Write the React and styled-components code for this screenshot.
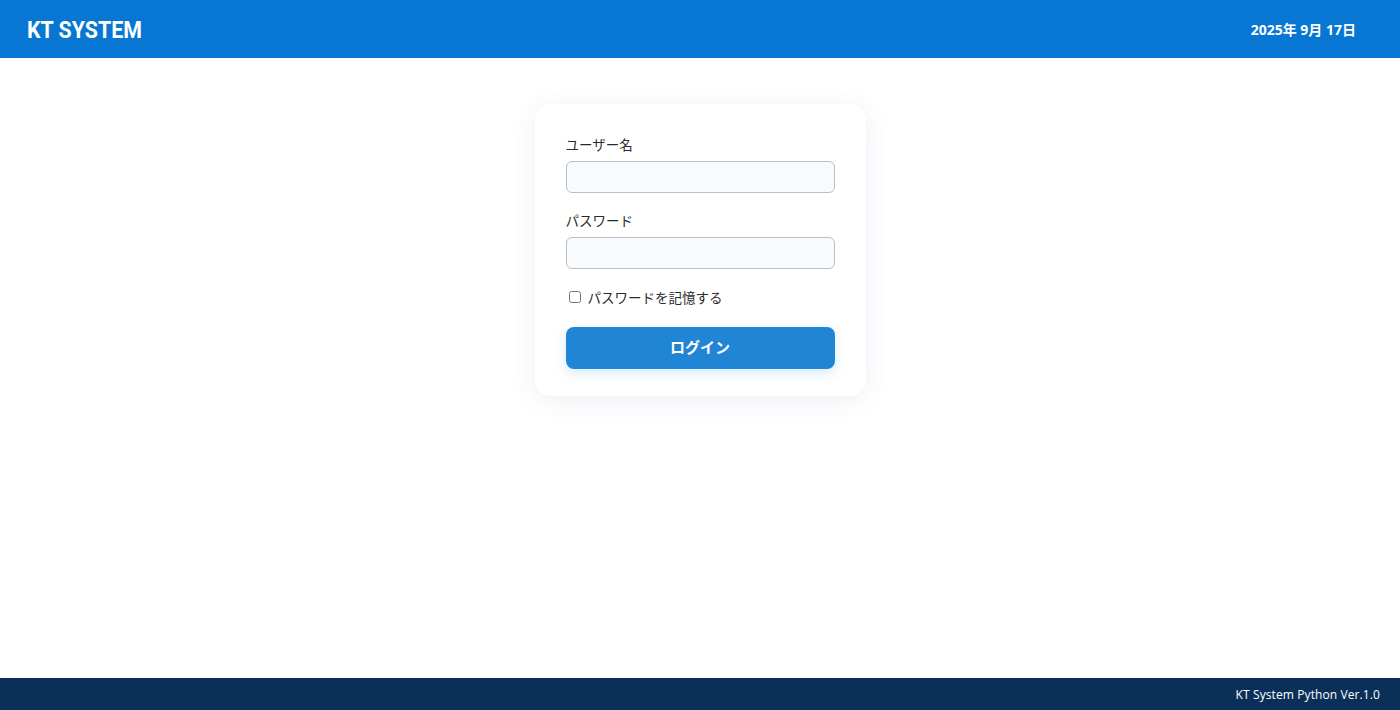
import styled, { createGlobalStyle } from 'styled-components';

const GlobalStyle = createGlobalStyle`
  * { box-sizing: border-box; }
  body {
    margin: 0;
    background: #ffffff;
    font-family: "Noto Sans", "Noto Sans CJK JP", sans-serif;
  }
`;

const Page = styled.div`
  min-height: 100vh;
  display: flex;
  flex-direction: column;
`;

const Header = styled.header`
  height: 58px;
  background: #0877d3;
  color: #fff;
  display: flex;
  align-items: center;
  justify-content: space-between;
  padding: 0 44px 0 27px;
`;

const Brand = styled.div`
  font-family: Roboto, "Liberation Sans", sans-serif;
  font-weight: 700;
  font-size: 24px;
  margin-top: 1px;
  transform: scaleX(0.89);
  transform-origin: left center;
`;

const DateText = styled.div`
  font-family: "Open Sans", "Noto Sans CJK JP", sans-serif;
  font-weight: 700;
  font-size: 14px;
`;

const Main = styled.main`
  flex: 1;
  display: flex;
  justify-content: center;
  align-items: flex-start;
  padding-top: 46px;
`;

const Card = styled.form`
  width: 331px;
  background: #fff;
  border-radius: 16px;
  padding: 31px 31px 27px;
  box-shadow: 0 4px 24px rgba(40, 80, 140, 0.09);
  display: flex;
  flex-direction: column;
`;

const Label = styled.label`
  font-family: "Noto Sans CJK JP", sans-serif;
  font-size: 13.5px;
  line-height: 18px;
  color: #2a2a2a;
  margin-top: ${p => (p.$first ? '0' : '18px')};
  margin-bottom: 8px;
`;

const Input = styled.input`
  height: 32px;
  width: 100%;
  border: 1px solid #bdbdbd;
  border-radius: 6px;
  background: #f8fbfe;
  padding: 0 10px;
  font-size: 14px;
  outline: none;
`;

const CheckRow = styled.label`
  display: flex;
  align-items: center;
  gap: 7px;
  margin-top: 18px;
  height: 20px;
  padding-left: 3px;
  font-family: "Noto Sans CJK JP", sans-serif;
  font-size: 13.5px;
  color: #2a2a2a;
`;

const Check = styled.input`
  width: 12px;
  height: 12px;
  margin: 0;
`;

const Button = styled.button`
  margin-top: 20px;
  height: 42px;
  padding: 0 0 3px;
  border: none;
  border-radius: 8px;
  background: #2185d5;
  color: #fff;
  font-family: "Noto Sans CJK JP", sans-serif;
  font-weight: 700;
  font-size: 15px;
  box-shadow: 0 4px 12px rgba(33, 133, 213, 0.18);
  cursor: pointer;
`;

const Footer = styled.footer`
  height: 32px;
  background: #0a3059;
  color: #fff;
  display: flex;
  align-items: center;
  justify-content: flex-end;
  padding: 0 20px;
  font-family: "Open Sans", sans-serif;
  font-size: 12px;
  letter-spacing: 0.1px;
`;

export default function App() {
  return (
    <Page>
      <GlobalStyle />
      <Header>
        <Brand>KT SYSTEM</Brand>
        <DateText>2025年 9月 17日</DateText>
      </Header>
      <Main>
        <Card onSubmit={e => e.preventDefault()}>
          <Label $first htmlFor="username">ユーザー名</Label>
          <Input id="username" type="text" />
          <Label htmlFor="password">パスワード</Label>
          <Input id="password" type="password" />
          <CheckRow>
            <Check type="checkbox" />
            パスワードを記憶する
          </CheckRow>
          <Button type="submit">ログイン</Button>
        </Card>
      </Main>
      <Footer>KT System Python Ver.1.0</Footer>
    </Page>
  );
}
